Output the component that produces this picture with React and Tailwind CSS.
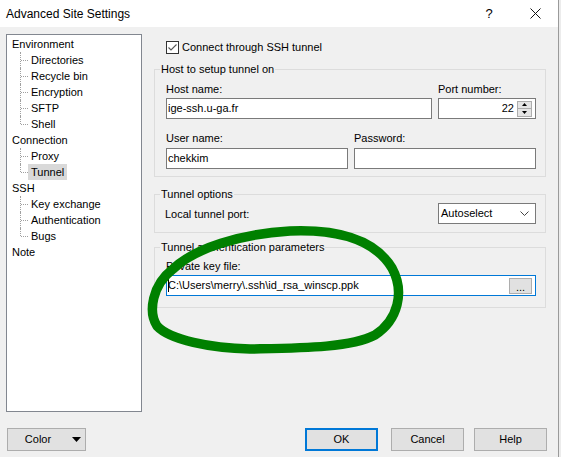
import React from "react";

const tree = [
  { label: "Environment", children: ["Directories", "Recycle bin", "Encryption", "SFTP", "Shell"] },
  { label: "Connection", children: ["Proxy", "Tunnel"] },
  { label: "SSH", children: ["Key exchange", "Authentication", "Bugs"] },
  { label: "Note", children: [] },
];

function Tree() {
  return (
    <div className="mt-[7px] ml-[6px] w-[136px] h-[378px] shrink-0 border border-[#828790] bg-white pt-[1px] text-[11px] text-black">
      {tree.map((g) => (
        <div key={g.label}>
          <div className="h-4 leading-4 pl-[5px]">{g.label}</div>
          {g.children.map((c, i) => {
            const last = i === g.children.length - 1;
            const sel = c === "Tunnel";
            return (
              <div key={c} className="relative h-4 flex items-center">
                <span
                  className={
                    "absolute left-[13px] top-0 border-l border-dotted border-[#a0a0a0] " +
                    (last ? "h-2" : "h-4")
                  }
                />
                <span className="absolute left-[14px] top-2 w-[7px] border-t border-dotted border-[#a0a0a0]" />
                <span className={"ml-[21px] px-[3px] leading-4 " + (sel ? "bg-[#d9d9d9]" : "")}>{c}</span>
              </div>
            );
          })}
        </div>
      ))}
    </div>
  );
}

function Group({ title, className, children }) {
  return (
    <fieldset className={"border border-[#dcdcdc] p-0 m-0 " + className}>
      <legend className="ml-[5px] px-[1px] leading-[14px] text-[11px]">{title}</legend>
      {children}
    </fieldset>
  );
}

function Input({ className, children }) {
  return (
    <div className={"h-[21px] border border-[#7a7a7a] bg-white flex items-center text-[11px] " + className}>
      {children}
    </div>
  );
}

export default function App() {
  return (
    <div className="relative w-[561px] h-[457px] flex bg-[#ececec] font-['Liberation_Sans',Arial,sans-serif] text-black overflow-hidden">
      <div className="w-[559px] h-full flex flex-col bg-[#f0f0f0] border-r border-[#9a9a9a]">
        {/* title bar */}
        <div className="h-[27px] bg-white flex items-center pl-[6px] text-[12px]">
          <span>Advanced Site Settings</span>
          <span className="ml-auto w-[46px] text-center text-[13px]">?</span>
          <span className="w-[46px] flex justify-center">
            <svg width="11" height="11" viewBox="0 0 11 11">
              <path d="M0.5 0.5 L10.5 10.5 M10.5 0.5 L0.5 10.5" stroke="#111" strokeWidth="1" fill="none" />
            </svg>
          </span>
        </div>

        {/* main */}
        <div className="flex h-[385px]">
          <Tree />
          <div className="ml-[12px] w-[392px] flex flex-col text-[11px]">
            <div className="mt-[13px] h-[14px] flex items-center pl-[12px]">
              <span className="w-[13px] h-[13px] border border-[#333] bg-white flex items-center justify-center">
                <svg width="11" height="11" viewBox="0 0 11 11">
                  <path d="M1.5 5.5 L4 8 L9.5 2.5" stroke="#555" strokeWidth="1.1" fill="none" />
                </svg>
              </span>
              <span className="ml-[3px] leading-[14px]">Connect through SSH tunnel</span>
            </div>

            <Group title="Host to setup tunnel on" className="mt-[8px] h-[115px]">
              <div className="pt-[6px] pl-[11px] flex flex-col">
                <div className="flex">
                  <div className="w-[266px] flex flex-col">
                    <span className="h-[14px] leading-[14px]">Host name:</span>
                    <Input className="mt-[2px] w-[266px] pl-[1px]">ige-ssh.u-ga.fr</Input>
                  </div>
                  <div className="ml-[6px] w-[98px] flex flex-col">
                    <span className="h-[14px] leading-[14px]">Port number:</span>
                    <Input className="mt-[2px] w-[98px] justify-end pr-[3px]">
                      <span className="mr-[3px]">22</span>
                      <div className="w-[15px] h-[16px] flex flex-col">
                        <div className="h-[8px] border border-[#adadad] bg-[#e5e5e5] flex items-center justify-center">
                          <svg width="5" height="3" viewBox="0 0 5 3"><path d="M0 3 L2.5 0 L5 3 Z" fill="#000" /></svg>
                        </div>
                        <div className="h-[8px] border border-t-0 border-[#adadad] bg-[#e5e5e5] flex items-center justify-center">
                          <svg width="5" height="3" viewBox="0 0 5 3"><path d="M0 0 L5 0 L2.5 3 Z" fill="#000" /></svg>
                        </div>
                      </div>
                    </Input>
                  </div>
                </div>
                <div className="flex mt-[12px]">
                  <div className="w-[182px] flex flex-col">
                    <span className="h-[14px] leading-[14px]">User name:</span>
                    <Input className="mt-[3px] w-[182px] pl-[1px]">chekkim</Input>
                  </div>
                  <div className="ml-[6px] w-[182px] flex flex-col">
                    <span className="h-[14px] leading-[14px]">Password:</span>
                    <Input className="mt-[3px] w-[182px]" />
                  </div>
                </div>
              </div>
            </Group>

            <Group title="Tunnel options" className="mt-[10px] h-[46px]">
              <div className="mt-[2px] pl-[10px] flex items-center">
                <span className="w-[273px] leading-[14px]">Local tunnel port:</span>
                <Input className="w-[98px] pl-[2px] pr-[6px] justify-between">
                  <span>Autoselect</span>
                  <svg width="9" height="5" viewBox="0 0 9 5">
                    <path d="M0.5 0.5 L4.5 4.5 L8.5 0.5" stroke="#444" strokeWidth="1" fill="none" />
                  </svg>
                </Input>
              </div>
            </Group>

            <Group title="Tunnel authentication parameters" className="mt-[7px] h-[68px]">
              <div className="pt-[5px] pl-[11px] flex flex-col">
                <span className="h-[14px] leading-[14px]">Private key file:</span>
                <div className="relative mt-[2px] w-[370px] h-[21px] border border-[#0078d7] bg-white flex items-center text-[11px] pl-[1px] pr-[3px]">
                  <span className="absolute left-[1px] top-[3px] w-px h-[13px] bg-black" />
                  <span>C:\Users\merry\.ssh\id_rsa_winscp.ppk</span>
                  <span className="ml-auto w-[23px] h-[16px] border border-[#adadad] bg-[#e1e1e1] flex items-center justify-center leading-none pt-[3px]">
                    ...
                  </span>
                </div>
              </div>
            </Group>
          </div>
        </div>

        {/* footer */}
        <div className="mt-[16px] flex text-[11px]">
          <div className="ml-[7px] w-[79px] h-[23px] border border-[#adadad] bg-[#e1e1e1] flex items-center">
            <span className="w-[60px] text-center">Color</span>
            <svg width="9" height="5" viewBox="0 0 9 5" className="ml-[4px]">
              <path d="M0 0 L9 0 L4.5 5 Z" fill="#000" />
            </svg>
          </div>
          <div className="ml-[219px] w-[73px] h-[23px] border-2 border-[#0078d7] bg-[#e1e1e1] flex items-center justify-center">
            OK
          </div>
          <div className="ml-[13px] w-[73px] h-[23px] border border-[#adadad] bg-[#e1e1e1] flex items-center justify-center">
            Cancel
          </div>
          <div className="ml-[10px] w-[73px] h-[23px] border border-[#adadad] bg-[#e1e1e1] flex items-center justify-center">
            Help
          </div>
        </div>
      </div>

      {/* hand-drawn green annotation */}
      <svg className="absolute inset-0 pointer-events-none" width="561" height="457" viewBox="0 0 561 457">
        <path
          d="M 173 269 C 195 248, 240 234, 290 231 C 340 229, 375 240, 392 268 C 405 292, 398 320, 375 335 C 350 348, 300 348, 250 349 C 210 348, 170 340, 157 326 C 148 312, 152 285, 173 269 Z"
          fill="none"
          stroke="#008000"
          strokeWidth="9.5"
          strokeLinecap="round"
          strokeLinejoin="round"
        />
      </svg>
    </div>
  );
}
